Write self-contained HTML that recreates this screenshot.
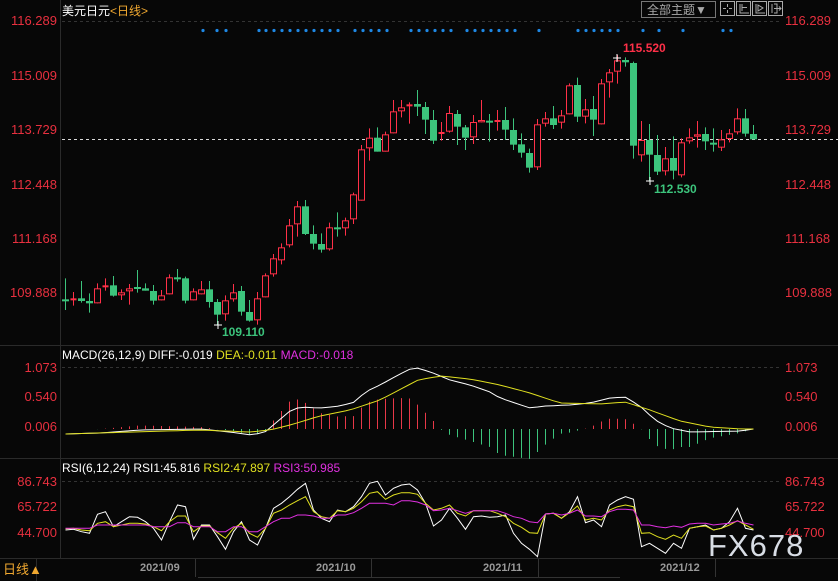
<!DOCTYPE html>
<html><head><meta charset="utf-8"><style>
html,body{margin:0;padding:0;background:#070707;overflow:hidden}
svg{display:block}
text{font-family:"Liberation Sans","Noto Sans CJK SC",sans-serif}
</style></head><body>
<svg id="s" width="838" height="581" xmlns="http://www.w3.org/2000/svg">
<rect width="838" height="581" fill="#070707"/>
<g stroke="#2a2a2a" stroke-width="1">
<line x1="60.5" y1="0" x2="60.5" y2="558"/>
<line x1="0" y1="345.5" x2="838" y2="345.5"/>
<line x1="0" y1="458.5" x2="838" y2="458.5"/>
<line x1="0" y1="558.5" x2="838" y2="558.5"/>
<line x1="36.5" y1="558" x2="36.5" y2="581"/>
</g>
<g stroke="#333" stroke-dasharray="3,3">
<line x1="62" y1="21.5" x2="780" y2="21.5"/>
<line x1="62" y1="367.5" x2="780" y2="367.5"/>
<line x1="62" y1="481.5" x2="780" y2="481.5"/>
</g>
<line x1="62" y1="139.5" x2="838" y2="139.5" stroke="#d9d9d9" stroke-dasharray="3,3" stroke-width="1"/>
<g font-size="13" fill="#e8303f" text-anchor="end">
<text x="57" y="25">116.289</text><text x="57" y="80">115.009</text><text x="57" y="134">113.729</text>
<text x="57" y="189">112.448</text><text x="57" y="243">111.168</text><text x="57" y="297">109.888</text>
<text x="57" y="372">1.073</text><text x="57" y="401">0.540</text><text x="57" y="431">0.006</text>
<text x="57" y="486">86.743</text><text x="57" y="511">65.722</text><text x="57" y="537">44.700</text>
</g>
<g font-size="13" fill="#e8303f">
<text x="785" y="25">116.289</text><text x="785" y="80">115.009</text><text x="785" y="134">113.729</text>
<text x="785" y="189">112.448</text><text x="785" y="243">111.168</text><text x="785" y="297">109.888</text>
<text x="785" y="372">1.073</text><text x="785" y="401">0.540</text><text x="785" y="431">0.006</text>
<text x="785" y="486">86.743</text><text x="785" y="511">65.722</text><text x="785" y="537">44.700</text>
</g>
<text x="62" y="15" font-size="12" fill="#fff">美元日元<tspan fill="#f0a830">&lt;日线&gt;</tspan></text>
<rect x="641.5" y="1.5" width="74" height="16" fill="none" stroke="#777"/>
<text x="647" y="14" font-size="12" fill="#aaa">全部主题▼</text>
<g fill="none" stroke="#aaa">
<rect x="720.5" y="1.5" width="14" height="14"/><rect x="736.5" y="1.5" width="14" height="14"/>
<rect x="752.5" y="1.5" width="14" height="14"/><rect x="768.5" y="1.5" width="14" height="14"/>
<path d="M727.5 4v3M727.5 10v3M723 8.5h3M729 8.5h3M740 4v9h9M742 4v7M742 7.5h5M756 4v9h9M758 5l5 3-5 3zM772 4v9M774 4h3v9h-3M774 8.5h7M779 6.5l2 2-2 2"/>
</g>
<g id="cand"></g>
<g id="dots" fill="#1e88e5"></g>
<text x="623" y="52" font-size="12" font-weight="bold" fill="#ff3048">115.520</text>
<path d="M613 58h8M617 54v8" stroke="#fff"/>
<text x="654" y="193" font-size="12" font-weight="bold" fill="#3cc47c">112.530</text>
<path d="M646 181h8M650 177v8" stroke="#fff"/>
<text x="222" y="336" font-size="12" font-weight="bold" fill="#3cc47c">109.110</text>
<path d="M214 325h8M218 321v8" stroke="#fff"/>
<text x="62" y="359" font-size="12" fill="#fff">MACD(26,12,9) DIFF:-0.019 <tspan fill="#e0e020">DEA:-0.011</tspan> <tspan fill="#e030e0">MACD:-0.018</tspan></text>
<text x="62" y="472" font-size="12" fill="#fff">RSI(6,12,24) RSI1:45.816 <tspan fill="#e0e020">RSI2:47.897</tspan> <tspan fill="#e030e0">RSI3:50.985</tspan></text>
<g id="ind"></g>
<text x="708" y="556" font-size="31" fill="#d8dde5" letter-spacing="1">FX678</text>
<text x="3" y="574" font-size="13" fill="#f0a830">日线▲</text>
<g font-size="11" font-weight="bold" fill="#999">
<text x="140" y="571">2021/09</text><text x="316" y="571">2021/10</text><text x="483" y="571">2021/11</text><text x="660" y="571">2021/12</text>
</g>
<g stroke="#333"><line x1="195.5" y1="559" x2="195.5" y2="577"/><line x1="371.5" y1="559" x2="371.5" y2="577"/><line x1="538.5" y1="559" x2="538.5" y2="577"/><line x1="715.5" y1="559" x2="715.5" y2="577"/>
<line x1="198" y1="577.5" x2="620" y2="577.5"/></g>
</svg>
<script>
var NS="http://www.w3.org/2000/svg";
function el(p,t,a){var e=document.createElementNS(NS,t);for(var k in a)e.setAttribute(k,a[k]);p.appendChild(e);return e;}
// zoom4 candles (offset y 80) i0..i44: [type,bt,bb,wt,wb]
var A=[["d",658,658,595,690],["r",655,658,636,677],["g",655,663,603,668],["g",663,670,640,698],["r",625,670,610,670],["r",616,622,595,632],["g",616,647,588,650],["r",637,646,628,660],["r",625,634,612,674],["g",621,626,570,638],["g",625,632,610,632],["g",633,662,615,674],["r",646,661,630,661],["r",592,643,583,643],["d",592,592,567,605],["g",595,662,590,670],["r",634,661,625,661],["r",628,643,603,643],["g",628,666,603,683],["g",666,704,657,735],["r",661,703,646,722],["r",637,658,612,665],["g",633,695,618,707],["g",696,722,660,725],["r",655,721,636,734],["r",586,652,580,652],["r",535,583,522,590],["r",502,541,490,553],["r",436,496,417,502],["r",379,433,363,470],["g",379,462,360,465],["g",462,491,436,508],["g",492,509,460,518],["r",442,508,428,512],["d",442,442,397,470],["r",421,445,413,467],["r",343,418,338,432],["r",208,362,195,362],["r",173,205,145,242],["g",173,215,142,215],["r",163,215,155,215],["r",94,160,60,160],["r",82,94,60,112],["r",73,78,67,131]];
var B=[["g",192,200,150,228],["g",201,239,186,282],["g",240,302,210,312],["r",276,280,246,302],["r",219,275,198,278],["g",222,260,210,315],["g",262,293,255,330],["r",246,292,225,312],["r",240,247,180,247],["d",242,242,222,305],["r",240,245,210,272],["g",240,269,201,300],["g",270,314,235,330],["g",313,338,280,353],["g",339,383,326,398],["r",253,382,237,390],["r",235,251,216,260],["g",235,255,198,267],["r",226,248,210,266],["r",136,223,130,223],["g",135,230,113,246],["r",208,230,177,250],["g",207,239,168,288],["r",130,253,117,253],["r",97,127,87,173],["r",61,95,45,131],["g",60,67,52,80],["g",69,317,65,356],["r",300,346,243,365],["g",300,344,252,422],["g",345,395,285,405],["r",355,394,321,406],["g",354,392,289,418],["r",307,406,295,412],["r",292,304,265,311],["r",283,290,243,323],["g",282,304,262,330],["d",308,308,265,335],["r",298,323,270,333],["r",280,297,267,307],["r",235,277,205,283],["g",235,281,207,290],["g",282,298,255,298]];
var C=[];A.forEach(function(c){C.push([c[0],80+c[1]/3,80+c[2]/3,80+c[3]/3,80+c[4]/3]);});
B.forEach(function(c){C.push([c[0],40+c[1]/3,40+c[2]/3,40+c[3]/3,40+c[4]/3]);});
var g=document.getElementById("cand");
C.forEach(function(c,i){var x=Math.round(65+8*i)+0.5;var col=c[0]=="r"?"#ff3048":"#3cc47c";
 el(g,"line",{x1:x,x2:x,y1:c[3],y2:c[4],stroke:col});
 var h=Math.max(c[2]-c[1],1);
 if(c[0]=="r"){ if(h<=2) el(g,"rect",{x:x-3,y:c[1],width:6,height:2,fill:col}); else el(g,"rect",{x:x-3,y:c[1]+0.5,width:6,height:h-1,fill:"#070707",stroke:col});}
 else el(g,"rect",{x:x-3.5,y:c[1],width:7,height:Math.max(h,2),fill:col});
});
var dx=[203,217,226,259,266,274,282,290,298,306,314,322,330,338,355,363,371,379,387,411,419,427,435,443,451,467,475,483,491,499,507,515,539,578,586,594,602,610,618,643,659,683,723,731];
var dg=document.getElementById("dots");dx.forEach(function(x){el(dg,"circle",{cx:x,cy:30.5,r:1.6});});
function interp(pts,x){for(var k=0;k<pts.length-1;k++){if(x<=pts[k+1][0]){var a=pts[k],b=pts[k+1];return a[1]+(b[1]-a[1])*(x-a[0])/(b[0]-a[0]);}}return pts[pts.length-1][1];}
var D=[[65,434],[100,433],[140,430],[200,429],[230,432],[252,435],[265,432],[290,411],[300,407],[320,408],[340,406],[355,402],[365,392],[380,385],[400,374],[410,369],[418,368],[433,373],[450,380],[470,385],[490,392],[500,398],[530,408],[545,406],[570,405],[590,403],[610,398],[625,397],[640,406],[655,420],[670,428],[690,432],[740,431],[753,429]];
var E=[[65,434],[200,430],[250,432],[270,430],[290,425],[320,416],[350,410],[380,400],[418,380],[440,376],[470,379],[500,385],[530,393],[560,403],[600,404],[625,402],[650,410],[680,421],[710,427],[740,429],[753,429]];
var ig=document.getElementById("ind");var dp="",ep="";
for(var i=0;i<87;i++){var x=Math.round(65+8*i)+0.5;var d=interp(D,x),e=interp(E,x);var t=429+2*(d-e);
 el(ig,"line",{x1:x,x2:x,y1:429,y2:t,stroke:t<429?"#e83848":"#3cc47c"});
 dp+=(i?"L":"M")+x+" "+d.toFixed(1);ep+=(i?"L":"M")+x+" "+e.toFixed(1);}
el(ig,"path",{d:dp,fill:"none",stroke:"#fff"});el(ig,"path",{d:ep,fill:"none",stroke:"#e0e020"});
var R1=[570,568,575,580,523,515,560,545,530,532,545,565,600,545,495,500,598,555,555,590,628,575,545,600,615,565,505,490,470,448,430,510,535,545,510,515,500,470,430,424,465,445,435,432,450,490,558,540,505,535,568,530,528,532,530,525,580,610,628,650,522,520,535,515,470,548,540,560,495,480,470,478,620,610,625,640,610,625,565,560,555,570,565,545,505,565,570];
var R2=[566,565,570,572,550,545,560,555,550,550,552,560,572,545,528,528,575,558,558,578,595,565,550,580,592,565,520,510,495,482,470,515,530,535,512,515,505,485,460,455,478,465,458,458,463,490,510,505,495,520,528,512,512,512,520,530,550,562,578,580,522,520,535,518,498,540,535,540,510,500,495,500,580,578,590,598,585,595,565,560,558,570,565,555,542,555,568];
var R3=[565,565,565,565,555,555,555,555,555,555,555,560,560,560,548,548,560,560,560,575,575,560,560,575,575,560,545,535,535,525,525,528,535,535,525,525,518,505,490,490,490,495,482,482,486,495,512,510,505,512,520,512,512,512,512,520,530,535,545,548,522,520,525,520,510,528,528,530,515,508,508,510,555,555,560,563,558,562,552,550,550,555,552,550,543,550,555];
[[R1,"#fff"],[R2,"#e0e020"],[R3,"#e030e0"]].forEach(function(r){var p="";r[0].forEach(function(v,i){p+=(i?"L":"M")+(Math.round(65+8*i)+0.5)+" "+(340+v/3).toFixed(1);});el(ig,"path",{d:p,fill:"none",stroke:r[1]});});
</script>
</body></html>
